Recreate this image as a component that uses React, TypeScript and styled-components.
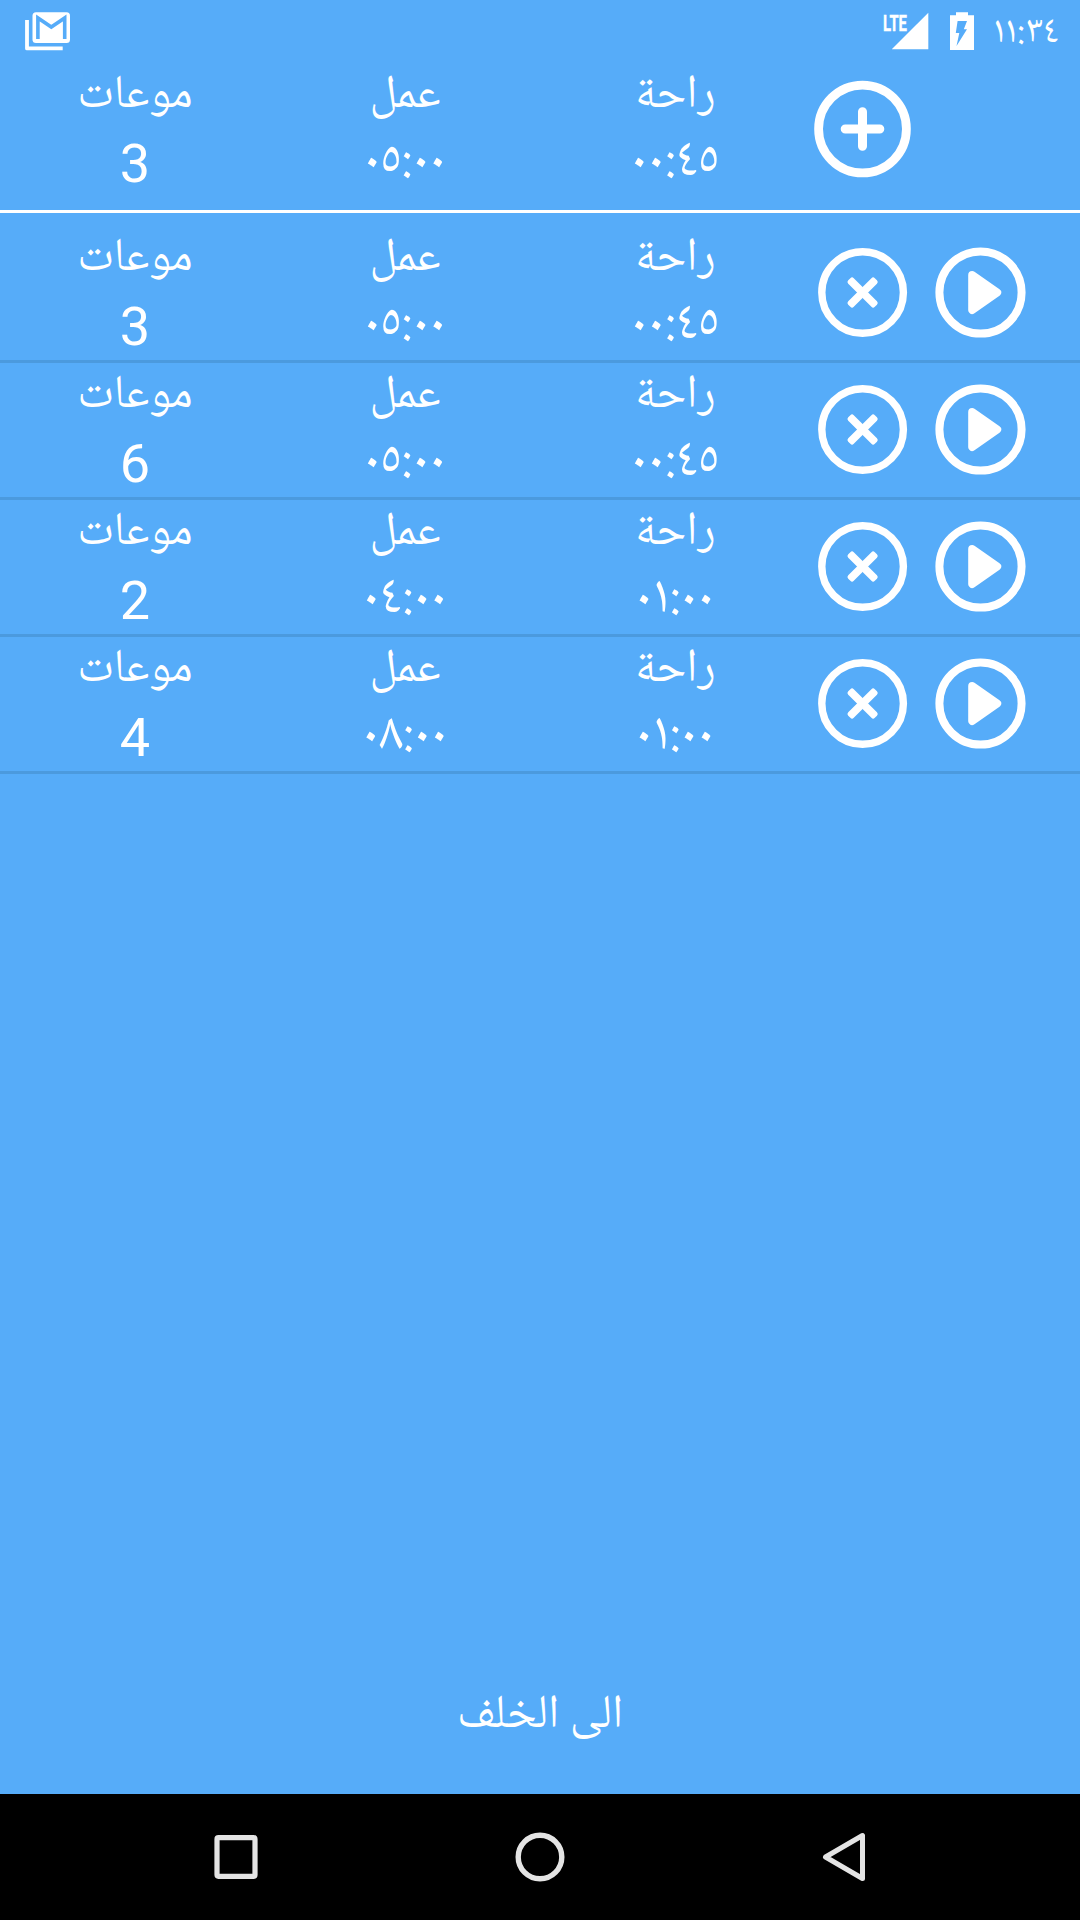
import React from 'react';
import styled, { createGlobalStyle } from 'styled-components';

const GlobalStyle = createGlobalStyle`
  *, *::before, *::after { box-sizing: border-box; }
  body { margin: 0; background: #56acf9; }
`;

const arabic = `"Noto Naskh Arabic UI", "Noto Naskh Arabic", "DejaVu Sans", sans-serif`;

const Screen = styled.div`
  width: 1080px;
  height: 1920px;
  display: flex;
  flex-direction: column;
  overflow: hidden;
  background: #56acf9;
  color: #fff;
  font-family: Roboto, sans-serif;
`;

const StatusBar = styled.header`
  height: 63px;
  flex: none;
  display: flex;
  align-items: center;
  padding: 0 22px 0 24px;
`;

const Icon = styled.svg`
  display: block;
  flex: none;
`;

const StatusEnd = styled.div`
  margin-left: auto;
  display: flex;
  align-items: center;
`;

const Lte = styled.span`
  width: 25px;
  height: 40px;
  margin-right: -16px;
  font: 700 22.5px/22px Roboto, sans-serif;
  -webkit-text-stroke: 0.4px #fff;
  white-space: nowrap;
  transform: scaleX(0.66);
  transform-origin: left;
`;

const Clock = styled.span`
  width: 64px;
  margin-left: 20px;
  display: flex;
  justify-content: center;
  font: 38px/40px ${arabic};
  white-space: nowrap;
  direction: ltr;
`;

const Row = styled.section<{ $kind: 'header' | 'first' | 'item' }>`
  flex: none;
  display: grid;
  grid-template-columns: 270px 270px 270px 1fr;
  height: ${p => (p.$kind === 'item' ? 137 : 150)}px;
  padding-top: ${p => (p.$kind === 'first' ? 13 : 0)}px;
  border-bottom: 3px solid ${p => (p.$kind === 'header' ? '#fff' : '#4b9ade')};
`;

const Column = styled.div`
  display: flex;
  flex-direction: column;
  align-items: center;
`;

const Label = styled.div`
  height: 68px;
  font: 47px/64px ${arabic};
  white-space: nowrap;
  direction: rtl;
`;

const Count = styled.div`
  height: 66px;
  font: 54px/66px Roboto, sans-serif;
`;

const Time = styled.div`
  height: 60px;
  font: 54px/60px ${arabic};
  white-space: nowrap;
  direction: ltr;
`;

const Actions = styled.div<{ $header?: boolean }>`
  display: flex;
  align-items: center;
  gap: 22px;
  padding: 0 0 ${p => (p.$header ? 15 : 0)}px ${p => (p.$header ? 2 : 5)}px;
`;

const IconButton = styled.button`
  display: block;
  flex: none;
  padding: 0;
  border: 0;
  background: none;
  color: inherit;
`;

const Footer = styled.footer`
  margin-top: auto;
  height: 160px;
  padding-top: 6px;
  flex: none;
  display: flex;
  justify-content: center;
  align-items: center;
`;

const NavBar = styled.nav`
  height: 126px;
  flex: none;
  display: flex;
  justify-content: space-between;
  align-items: center;
  padding: 0 210px;
  background: #000;
`;

const PlusIcon = () => (
  <Icon width="101" height="98" viewBox="0 0 101 98" fill="none" stroke="#fff">
    <circle cx="50.5" cy="49" r="43.9" strokeWidth="8.8" />
    <path d="M33.2 49H67.8M50.5 31.7V66.3" strokeWidth="9" strokeLinecap="round" />
  </Icon>
);

const CloseIcon = () => (
  <Icon width="96" height="92" viewBox="0 0 96 92">
    <circle cx="47.6" cy="45.5" r="40.8" fill="none" stroke="#fff" strokeWidth="7.4" />
    <g fill="#fff" transform="translate(47.6 45.5) rotate(45)">
      <rect x="-18.8" y="-3.9" width="37.6" height="7.8" rx="2.4" />
      <rect x="-3.9" y="-18.8" width="7.8" height="37.6" rx="2.4" />
    </g>
  </Icon>
);

const PlayIcon = () => (
  <Icon width="96" height="92" viewBox="0 0 96 92" fill="none" stroke="#fff">
    <circle cx="47.5" cy="45.5" r="41.1" strokeWidth="8" />
    <path d="M39.2 28L64.2 45.5L39.2 63Z" fill="#fff" strokeWidth="8" strokeLinejoin="round" />
  </Icon>
);

interface Preset {
  count: number;
  work: string;
  rest: string;
}

const presets: Preset[] = [
  { count: 3, work: '٠٥:٠٠', rest: '٠٠:٤٥' },
  { count: 6, work: '٠٥:٠٠', rest: '٠٠:٤٥' },
  { count: 2, work: '٠٤:٠٠', rest: '٠١:٠٠' },
  { count: 4, work: '٠٨:٠٠', rest: '٠١:٠٠' },
];

const Values = ({ count, work, rest }: Preset) => (
  <>
    <Column><Label>موعات</Label><Count>{count}</Count></Column>
    <Column><Label>عمل</Label><Time>{work}</Time></Column>
    <Column><Label>راحة</Label><Time>{rest}</Time></Column>
  </>
);

export default function App() {
  return (
    <Screen>
      <GlobalStyle />
      <StatusBar>
        <Icon width="48" height="40" viewBox="24 12 48 40">
          <path d="M27 20V48.4H62.7" fill="none" stroke="#fff" strokeWidth="3.8" strokeLinejoin="round" />
          <rect x="32.5" y="12.3" width="37.5" height="30.7" rx="3.5" fill="#fff" />
          <path d="M37.9 39V18L51.3 27L64.7 18V39" fill="none" stroke="#56acf9" strokeWidth="3.6" />
        </Icon>
        <StatusEnd>
          <Lte>LTE</Lte>
          <Icon width="82" height="40" viewBox="892 12 82 40">
            <path d="M891.8 49.3L928.3 12.8V49.3Z" fill="#fff" />
            <path d="M950 15.3H956V12.3H968V15.3H974V50H950Z" fill="#fff" />
            <path d="M957.6 21H967L963.8 29.3H967L956.5 46L959.3 33H955.8Z" fill="#56acf9" />
          </Icon>
          <Clock>١١:٣٤</Clock>
        </StatusEnd>
      </StatusBar>
      <Row $kind="header">
        <Values {...presets[0]} />
        <Actions $header><IconButton><PlusIcon /></IconButton></Actions>
      </Row>
      {presets.map((preset, i) => (
        <Row key={i} $kind={i === 0 ? 'first' : 'item'}>
          <Values {...preset} />
          <Actions>
            <IconButton><CloseIcon /></IconButton>
            <IconButton><PlayIcon /></IconButton>
          </Actions>
        </Row>
      ))}
      <Footer><Label>الى الخلف</Label></Footer>
      <NavBar>
        <Icon width="52" height="52" viewBox="0 0 52 52" fill="none" stroke="#e4e4e4" strokeWidth="5.2" strokeLinejoin="round">
          <rect x="7" y="6.7" width="38" height="38.6" rx="1.5" />
        </Icon>
        <Icon width="52" height="52" viewBox="0 0 52 52" fill="none" stroke="#e4e4e4" strokeWidth="5.4">
          <circle cx="26" cy="26" r="21.8" />
        </Icon>
        <Icon width="52" height="52" viewBox="0 0 52 52" fill="none" stroke="#e4e4e4" strokeWidth="5" strokeLinejoin="round">
          <path d="M44.5 4.5V47.5L7.5 26Z" />
        </Icon>
      </NavBar>
    </Screen>
  );
}
